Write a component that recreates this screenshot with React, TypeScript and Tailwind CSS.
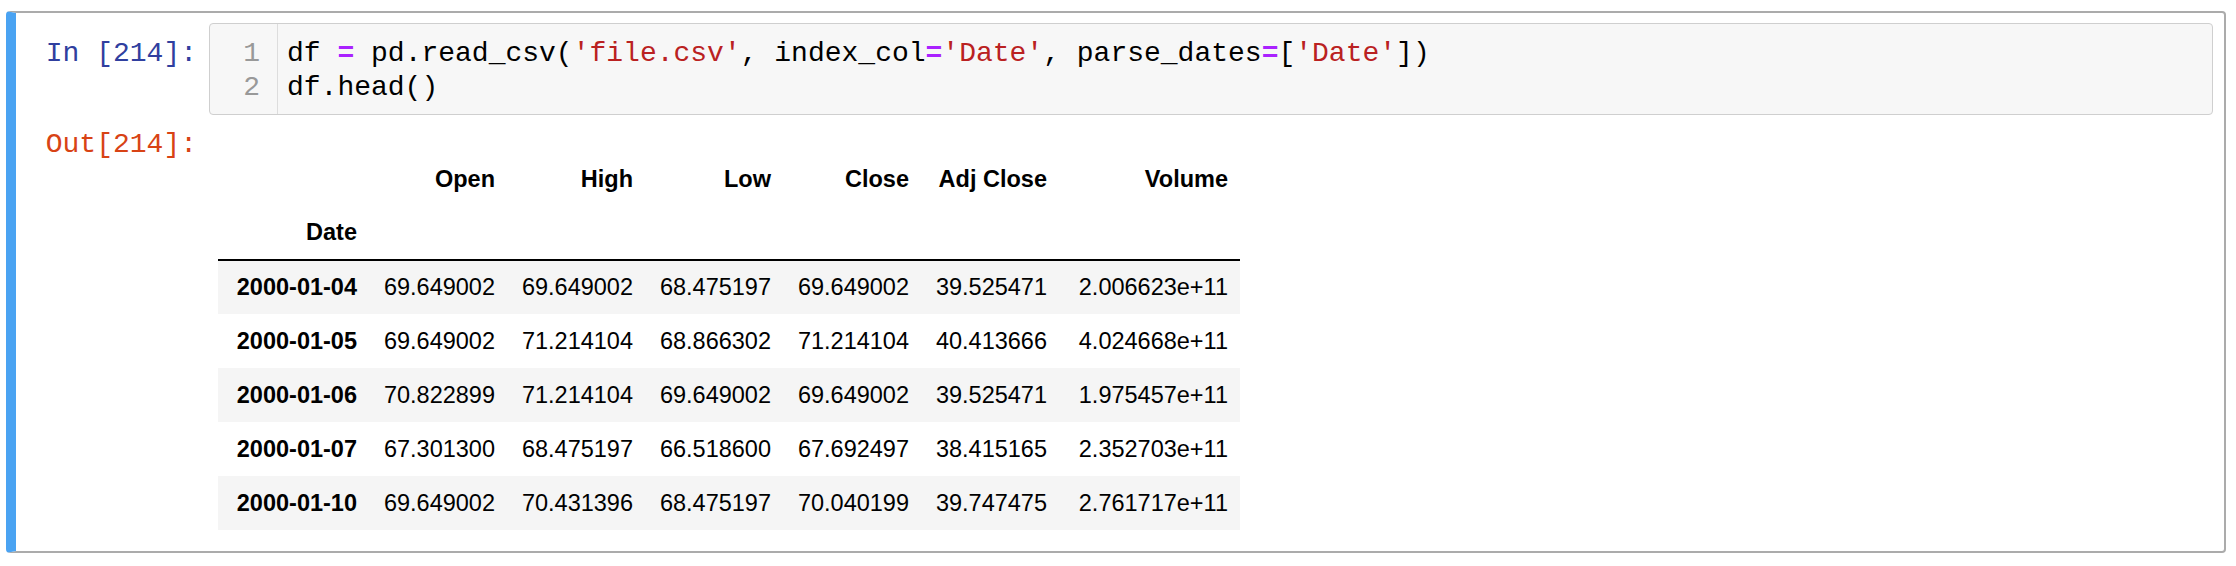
import React from 'react';

const mono = "font-['Liberation_Mono','DejaVu_Sans_Mono',monospace]";

interface Row {
  date: string;
  values: string[];
}

const columns = ['Open', 'High', 'Low', 'Close', 'Adj Close', 'Volume'];

const rows: Row[] = [
  { date: '2000-01-04', values: ['69.649002', '69.649002', '68.475197', '69.649002', '39.525471', '2.006623e+11'] },
  { date: '2000-01-05', values: ['69.649002', '71.214104', '68.866302', '71.214104', '40.413666', '4.024668e+11'] },
  { date: '2000-01-06', values: ['70.822899', '71.214104', '69.649002', '69.649002', '39.525471', '1.975457e+11'] },
  { date: '2000-01-07', values: ['67.301300', '68.475197', '66.518600', '67.692497', '38.415165', '2.352703e+11'] },
  { date: '2000-01-10', values: ['69.649002', '70.431396', '68.475197', '70.040199', '39.747475', '2.761717e+11'] },
];

const Op: React.FC = () => <span className="font-bold text-[#AA22FF]">=</span>;
const Str: React.FC<{ children: React.ReactNode }> = ({ children }) => (
  <span className="text-[#BA2121]">{children}</span>
);

const CodeInput: React.FC = () => (
  <div className="flex flex-1 border border-[#cfcfcf] rounded-[4px] bg-[#f7f7f7]">
    <div className={`w-[68px] border-r border-[#dddddd] pt-[13px] pb-[9px] pr-[17px] text-right text-[28px] leading-[34px] text-[#999999] ${mono}`}>
      <div>1</div>
      <div>2</div>
    </div>
    <div className={`flex-1 pl-[9px] pt-[13px] pb-[9px] text-[28px] leading-[34px] text-black whitespace-pre ${mono}`}>
      <div>
        df <Op /> pd.read_csv(<Str>'file.csv'</Str>, index_col<Op />
        <Str>'Date'</Str>, parse_dates<Op />[<Str>'Date'</Str>])
      </div>
      <div>df.head()</div>
    </div>
  </div>
);

const DataFrameTable: React.FC = () => {
  const widths = ['w-[138px]', 'w-[138px]', 'w-[138px]', 'w-[138px]', 'w-[138px]', 'w-[181px]'];
  return (
    <table className="mt-[24px] border-collapse text-[23.5px] leading-[27px] text-black font-['Liberation_Sans',Arial,sans-serif]">
      <thead className="border-b-2 border-black">
        <tr className="h-[54px]">
          <th className="w-[151px] px-[12px]"></th>
          {columns.map((c, i) => (
            <th key={c} className={`${widths[i]} px-[12px] text-right font-bold align-middle`}>
              {c}
            </th>
          ))}
        </tr>
        <tr className="h-[54px]">
          <th className="px-[12px] text-right font-bold align-middle">Date</th>
          {columns.map((c) => (
            <th key={c} className="px-[12px]"></th>
          ))}
        </tr>
      </thead>
      <tbody>
        {rows.map((r, idx) => (
          <tr key={r.date} className={`h-[54px] ${idx % 2 === 0 ? 'bg-[#f5f5f5]' : 'bg-white'}`}>
            <th className="px-[12px] text-right font-bold align-middle">{r.date}</th>
            {r.values.map((v, i) => (
              <td key={i} className="px-[12px] text-right align-middle">
                {v}
              </td>
            ))}
          </tr>
        ))}
      </tbody>
    </table>
  );
};

export default function App() {
  return (
    <div className="bg-white w-[2236px] h-[566px] pt-[11px] pl-[6px] pr-[10px]">
      <div className="border-2 border-l-[10px] border-[#ababab] border-l-[#4aa3f2] rounded-[4px] pt-[10px] pr-[11px] pb-[10px]">
        <div className="flex">
          <div className={`w-[193px] shrink-0 pt-[14px] pr-[12px] text-right text-[28px] leading-[34px] text-[#303F9F] ${mono}`}>
            In [214]:
          </div>
          <CodeInput />
        </div>
        <div className="flex mt-[2px]">
          <div className={`w-[193px] shrink-0 pt-[11px] pr-[12px] text-right text-[28px] leading-[34px] text-[#D84315] ${mono}`}>
            Out[214]:
          </div>
          <div className="flex-1 pl-[9px] pt-[11px] pb-[11px]">
            <DataFrameTable />
          </div>
        </div>
      </div>
    </div>
  );
}
